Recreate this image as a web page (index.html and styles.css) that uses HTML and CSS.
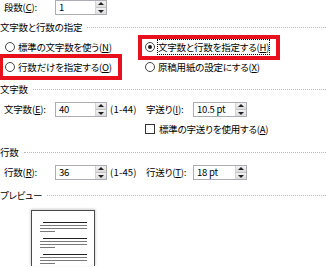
FILE: index.html
```html
<html>
    <head>
        <meta charset="utf-8">
        <link rel="stylesheet" href="styles.css">
    </head>
    <body>
        <div class="dialog">

            <div class="row top-row">
                <label class="label">段数(<u>C</u>):</label>
                <div class="spin"><span class="value">1</span><span class="spin-btn"><i class="up"></i><i class="down"></i></span></div>
            </div>

            <div class="group-title"><span>文字数と行数の指定</span></div>
            <div class="radio-grid">
                <div class="radio"><span class="dot"></span>標準の文字数を使う(<u>N</u>)</div>
                <div class="radio checked"><span class="dot"></span><span class="focus">文字数と行数を指定する(<u>H</u>)</span></div>
                <div class="radio"><span class="dot"></span>行数だけを指定する(<u>O</u>)</div>
                <div class="radio"><span class="dot"></span>原稿用紙の設定にする(<u>X</u>)</div>
            </div>

            <div class="group-title"><span>文字数</span></div>
            <div class="row field-row">
                <label class="label">文字数(<u>E</u>):</label>
                <div class="spin"><span class="value">40</span><span class="spin-btn"><i class="up"></i><i class="down"></i></span></div>
                <span class="range">(1-44)</span>
                <label class="label2">字送り(<u>I</u>):</label>
                <div class="spin small"><span class="value">10.5 pt</span><span class="spin-btn"><i class="up"></i><i class="down"></i></span></div>
            </div>
            <div class="row check-row">
                <div class="check"><span class="box"></span>標準の字送りを使用する(<u>A</u>)</div>
            </div>

            <div class="group-title"><span>行数</span></div>
            <div class="row field-row">
                <label class="label">行数(<u>R</u>):</label>
                <div class="spin"><span class="value">36</span><span class="spin-btn"><i class="up"></i><i class="down"></i></span></div>
                <span class="range">(1-45)</span>
                <label class="label2">行送り(<u>T</u>):</label>
                <div class="spin small"><span class="value">18 pt</span><span class="spin-btn"><i class="up"></i><i class="down"></i></span></div>
            </div>

            <div class="group-title"><span>プレビュー</span></div>
            <div class="preview">
                <div class="page">
                    <div class="para"><i class="first"></i><i></i><i></i><i class="last"></i></div>
                    <div class="para"><i class="first"></i><i></i><i></i><i class="last"></i></div>
                    <div class="para"><i class="first"></i><i></i><i></i><i class="last"></i></div>
                </div>
            </div>

            <!-- annotation boxes drawn over the dialog -->
            <div class="mark mark-left"></div>
            <div class="mark mark-right"></div>
        </div>
    </body>
</html>
```

FILE: styles.css
```css
html, body {
    margin: 0;
    padding: 0;
    background: #fff;
}
body {
    width: 326px;
    height: 267px;
    overflow: hidden;
    font-family: "Noto Sans CJK JP", "Noto Sans", sans-serif;
    font-size: 9.5px;
    letter-spacing: -0.2px;
    font-feature-settings: "palt";
    color: #000;
}
.dialog {
    position: relative;
    height: 267px;
    overflow: hidden;
}
u {
    text-decoration: underline;
    text-underline-offset: 1px;
}
.row {
    display: flex;
    align-items: center;
}
.top-row {
    height: 14px;
}
.label {
    width: 51px;
    padding-left: 4px;
    white-space: nowrap;
}

/* spin boxes */
.spin {
    display: flex;
    width: 50px;
    height: 13px;
    border: 1px solid #abadb3;
    background: #fff;
}
.spin .value {
    flex: 1;
    padding-left: 3px;
    line-height: 13px;
    white-space: nowrap;
}
.spin-btn {
    display: flex;
    flex-direction: column;
    width: 10px;
    border-left: 1px solid #d4d4d4;
}
.spin-btn i {
    flex: 1;
    position: relative;
    background: linear-gradient(#f2f2f2, #dcdcdc);
}
.spin-btn i.up {
    border-bottom: 1px solid #c4c4c4;
}
.spin-btn i::after {
    content: "";
    position: absolute;
    left: 2px;
    border-left: 3px solid transparent;
    border-right: 3px solid transparent;
}
.spin-btn i.up::after {
    top: 1px;
    border-bottom: 3px solid #222;
}
.spin-btn i.down::after {
    top: 2px;
    border-top: 3px solid #222;
}
.spin.small {
    width: 52px;
}

/* group headings with a dotted rule */
.group-title {
    display: flex;
    align-items: center;
    height: 14px;
    white-space: nowrap;
}
.group-title::after {
    content: "";
    flex: 1;
    margin-left: 5px;
    border-top: 1px dotted #b8b8b8;
}
.top-row + .group-title {
    margin-top: 6px;
}

/* radios */
.radio-grid {
    display: grid;
    grid-template-columns: 140px 1fr;
    grid-auto-rows: 20px;
    padding-left: 5px;
    margin-top: 3px;
    margin-bottom: 5px;
}
.radio {
    display: flex;
    align-items: center;
    white-space: nowrap;
}
.dot {
    position: relative;
    width: 8px;
    height: 8px;
    margin-right: 3px;
    border: 1px solid #444;
    border-radius: 50%;
    background: #fff;
    flex-shrink: 0;
}
.radio.checked .dot::after {
    content: "";
    position: absolute;
    left: 2px;
    top: 2px;
    width: 4px;
    height: 4px;
    border-radius: 50%;
    background: #1a1a1a;
}
.focus {
    outline: 1px dotted #000;
    outline-offset: 0;
}

/* fields */
.field-row {
    height: 16px;
    margin-top: 5px;
}
.range {
    margin-left: 3px;
    width: 36px;
    white-space: nowrap;
    letter-spacing: 0.2px;
}
.label2 {
    width: 47px;
    white-space: nowrap;
}
.check-row {
    height: 16px;
    margin-top: 4px;
    margin-bottom: 8px;
    padding-left: 145px;
}
.check {
    display: flex;
    align-items: center;
    white-space: nowrap;
}
.check .box {
    width: 8px;
    height: 8px;
    margin-right: 4px;
    border: 1px solid #333;
}
.field-row + .group-title {
    margin-top: 8px;
}

/* preview page */
.preview {
    padding-left: 31px;
    margin-top: 8px;
}
.page {
    width: 64px;
    height: 56px;
    border: 1px solid #4a4a4a;
    border-bottom: 0;
    box-shadow: -1px -1px 2px 0 #dcdcdc, 1px -1px 2px 0 #dcdcdc;
    padding: 11px 0 0 8px;
    box-sizing: border-box;
    overflow: hidden;
}
.para {
    display: flex;
    flex-direction: column;
    gap: 2px;
    margin-bottom: 6px;
}
.para i {
    display: block;
    width: 47px;
    height: 1px;
    flex-shrink: 0;
    background: #7a7a7a;
}
.para i.first {
    width: 44px;
    margin-left: 3px;
    background: #222;
}
.para i.last {
    width: 15px;
}

/* red annotation frames */
.mark {
    position: absolute;
    border: 4px solid #e8101c;
    box-sizing: border-box;
}
.mark-left {
    left: -1px;
    top: 54px;
    width: 123px;
    height: 26px;
}
.mark-right {
    left: 138px;
    top: 35px;
    width: 142px;
    height: 25px;
}
```
